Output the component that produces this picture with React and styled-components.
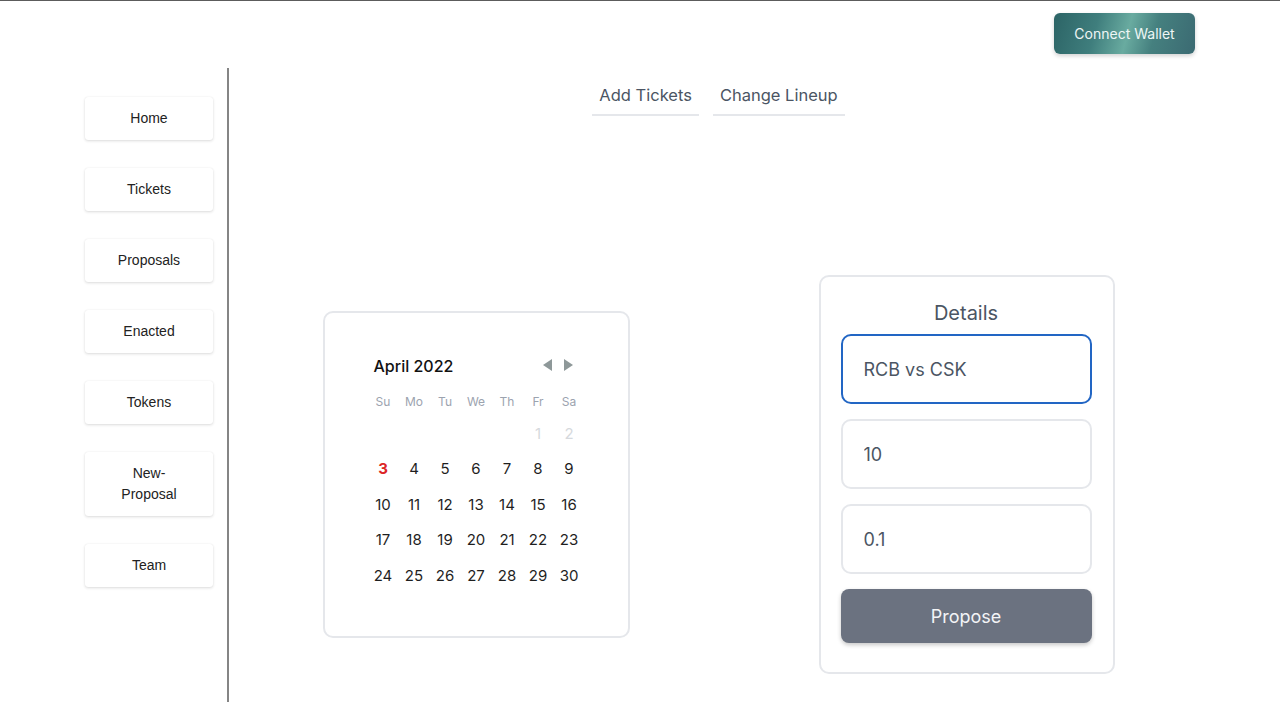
import React from "react";
import styled, { createGlobalStyle } from "styled-components";

const Global = createGlobalStyle`
  html, body { margin: 0; padding: 0; background: #fff; }
  body { font-family: Inter, "Noto Sans", "Liberation Sans", sans-serif; }
  * { box-sizing: border-box; }
`;

const Page = styled.div`
  min-height: 100vh;
  display: flex;
  flex-direction: column;
  border-top: 1px solid #5c5c5c;
`;

const Header = styled.header`
  height: 67px;
  display: flex;
  justify-content: flex-end;
  align-items: flex-start;
  padding: 12px 85px 0 0;
`;

const WalletButton = styled.button`
  width: 141px;
  height: 41px;
  border: none;
  border-radius: 6px;
  color: #eef6f5;
  font-family: Inter, "Noto Sans", sans-serif;
  font-size: 14px;
  background: linear-gradient(105deg, #2c6466 0%, #3f7e7d 30%, #69aba0 52%, #45807f 70%, #3b6a72 100%);
  box-shadow: 0 2px 4px rgba(0, 0, 0, 0.18);
  cursor: pointer;
`;

const Body = styled.div`
  flex: 1;
  display: flex;
`;

const Sidebar = styled.nav`
  width: 229px;
  flex-shrink: 0;
  border-right: 2px solid #858585;
  padding: 29px 0 0 85px;
  display: flex;
  flex-direction: column;
  gap: 28px;
`;

const NavButton = styled.button`
  width: 128px;
  padding: 11px 24px;
  border: none;
  background: #fff;
  border-radius: 3px;
  font-family: "Liberation Sans", Arial, sans-serif;
  font-size: 14px;
  line-height: 21px;
  color: #222;
  box-shadow: 0 1px 3px rgba(0, 0, 0, 0.14), 0 0 1px rgba(0, 0, 0, 0.08);
  cursor: pointer;
`;

const Main = styled.main`
  flex: 1;
  padding: 13px 72px 0 0;
  display: flex;
  flex-direction: column;
  align-items: center;
`;

const Tabs = styled.div`
  display: flex;
  gap: 14px;
`;

const Tab = styled.div`
  padding: 2px 7px 7px;
  font-size: 16.5px;
  line-height: 24px;
  color: #4b5563;
  border-bottom: 2px solid #e5e7eb;
  cursor: pointer;
`;

const CardRow = styled.div`
  margin-top: 159px;
  display: flex;
  align-items: center;
  gap: 189px;
`;

const CalendarCard = styled.div`
  width: 307px;
  border: 2px solid #e5e7eb;
  border-radius: 10px;
  padding: 41px 43px 43px;
`;

const CalHeader = styled.div`
  display: flex;
  align-items: center;
  justify-content: space-between;
  height: 24px;
  padding: 0 12px 0 6px;
`;

const MonthLabel = styled.div`
  font-size: 16px;
  font-weight: 500;
  color: #111;
`;

const Arrows = styled.div`
  display: flex;
  gap: 12px;
  margin-top: -3px;
`;

const Arrow = styled.span`
  width: 0;
  height: 0;
  border-top: 6px solid transparent;
  border-bottom: 6px solid transparent;
  ${(p) =>
    p.$dir === "left"
      ? "border-right: 9px solid #8e9899;"
      : "border-left: 9px solid #8e9899;"}
`;

const Grid = styled.div`
  display: grid;
  grid-template-columns: repeat(7, 1fr);
  text-align: center;
`;

const WeekRow = styled(Grid)`
  margin-top: 13px;
  height: 20px;
  align-items: center;
  margin-bottom: 4px;
`;

const WeekDay = styled.div`
  font-size: 12px;
  color: #9ca3af;
`;

const Day = styled.div`
  height: 35.5px;
  display: flex;
  align-items: center;
  justify-content: center;
  font-size: 15px;
  color: ${(p) => (p.$today ? "#dc2626" : p.$muted ? "#d6d9dd" : "#1f1f1f")};
  font-weight: ${(p) => (p.$today ? 700 : 400)};
`;

const DetailsCard = styled.div`
  width: 296px;
  border: 2px solid #e5e7eb;
  border-radius: 10px;
  padding: 21px 21px 29px 20px;
  display: flex;
  flex-direction: column;
`;

const Title = styled.div`
  text-align: center;
  font-size: 20px;
  line-height: 30px;
  color: #4b5563;
  margin-bottom: 6px;
`;

const Field = styled.input`
  width: 251px;
  height: 70px;
  border: 2px solid ${(p) => (p.$focused ? "#2266c4" : "#e5e7eb")};
  border-radius: 10px;
  padding: 0 21px;
  font-family: Inter, "Noto Sans", sans-serif;
  font-size: 18px;
  color: #4b5563;
  background: #fff;
  margin-bottom: 15px;
  outline: none;
`;

const ProposeButton = styled.button`
  width: 251px;
  height: 54px;
  border: none;
  border-radius: 8px;
  background: #6b7280;
  color: #f3f4f6;
  font-family: Inter, "Noto Sans", sans-serif;
  font-size: 18px;
  box-shadow: 0 2px 4px rgba(0, 0, 0, 0.22);
  cursor: pointer;
`;

const navItems = ["Home", "Tickets", "Proposals", "Enacted", "Tokens", "New-Proposal", "Team"];
const weekDays = ["Su", "Mo", "Tu", "We", "Th", "Fr", "Sa"];

const days = [];
for (let i = 0; i < 5; i++) days.push({ key: `e${i}`, label: "" });
days.push({ key: "d1", label: "1", muted: true });
days.push({ key: "d2", label: "2", muted: true });
for (let d = 3; d <= 30; d++) days.push({ key: `d${d}`, label: String(d), today: d === 3 });

export default function App() {
  return (
    <>
      <Global />
      <Page>
        <Header>
          <WalletButton>Connect Wallet</WalletButton>
        </Header>
        <Body>
          <Sidebar>
            {navItems.map((n) => (
              <NavButton key={n}>{n}</NavButton>
            ))}
          </Sidebar>
          <Main>
            <Tabs>
              <Tab>Add Tickets</Tab>
              <Tab>Change Lineup</Tab>
            </Tabs>
            <CardRow>
              <CalendarCard>
                <CalHeader>
                  <MonthLabel>April 2022</MonthLabel>
                  <Arrows>
                    <Arrow $dir="left" />
                    <Arrow $dir="right" />
                  </Arrows>
                </CalHeader>
                <WeekRow>
                  {weekDays.map((w) => (
                    <WeekDay key={w}>{w}</WeekDay>
                  ))}
                </WeekRow>
                <Grid>
                  {days.map((d) => (
                    <Day key={d.key} $muted={d.muted} $today={d.today}>
                      {d.label}
                    </Day>
                  ))}
                </Grid>
              </CalendarCard>
              <DetailsCard>
                <Title>Details</Title>
                <Field $focused defaultValue="RCB vs CSK" readOnly />
                <Field defaultValue="10" readOnly />
                <Field defaultValue="0.1" readOnly />
                <ProposeButton>Propose</ProposeButton>
              </DetailsCard>
            </CardRow>
          </Main>
        </Body>
      </Page>
    </>
  );
}
